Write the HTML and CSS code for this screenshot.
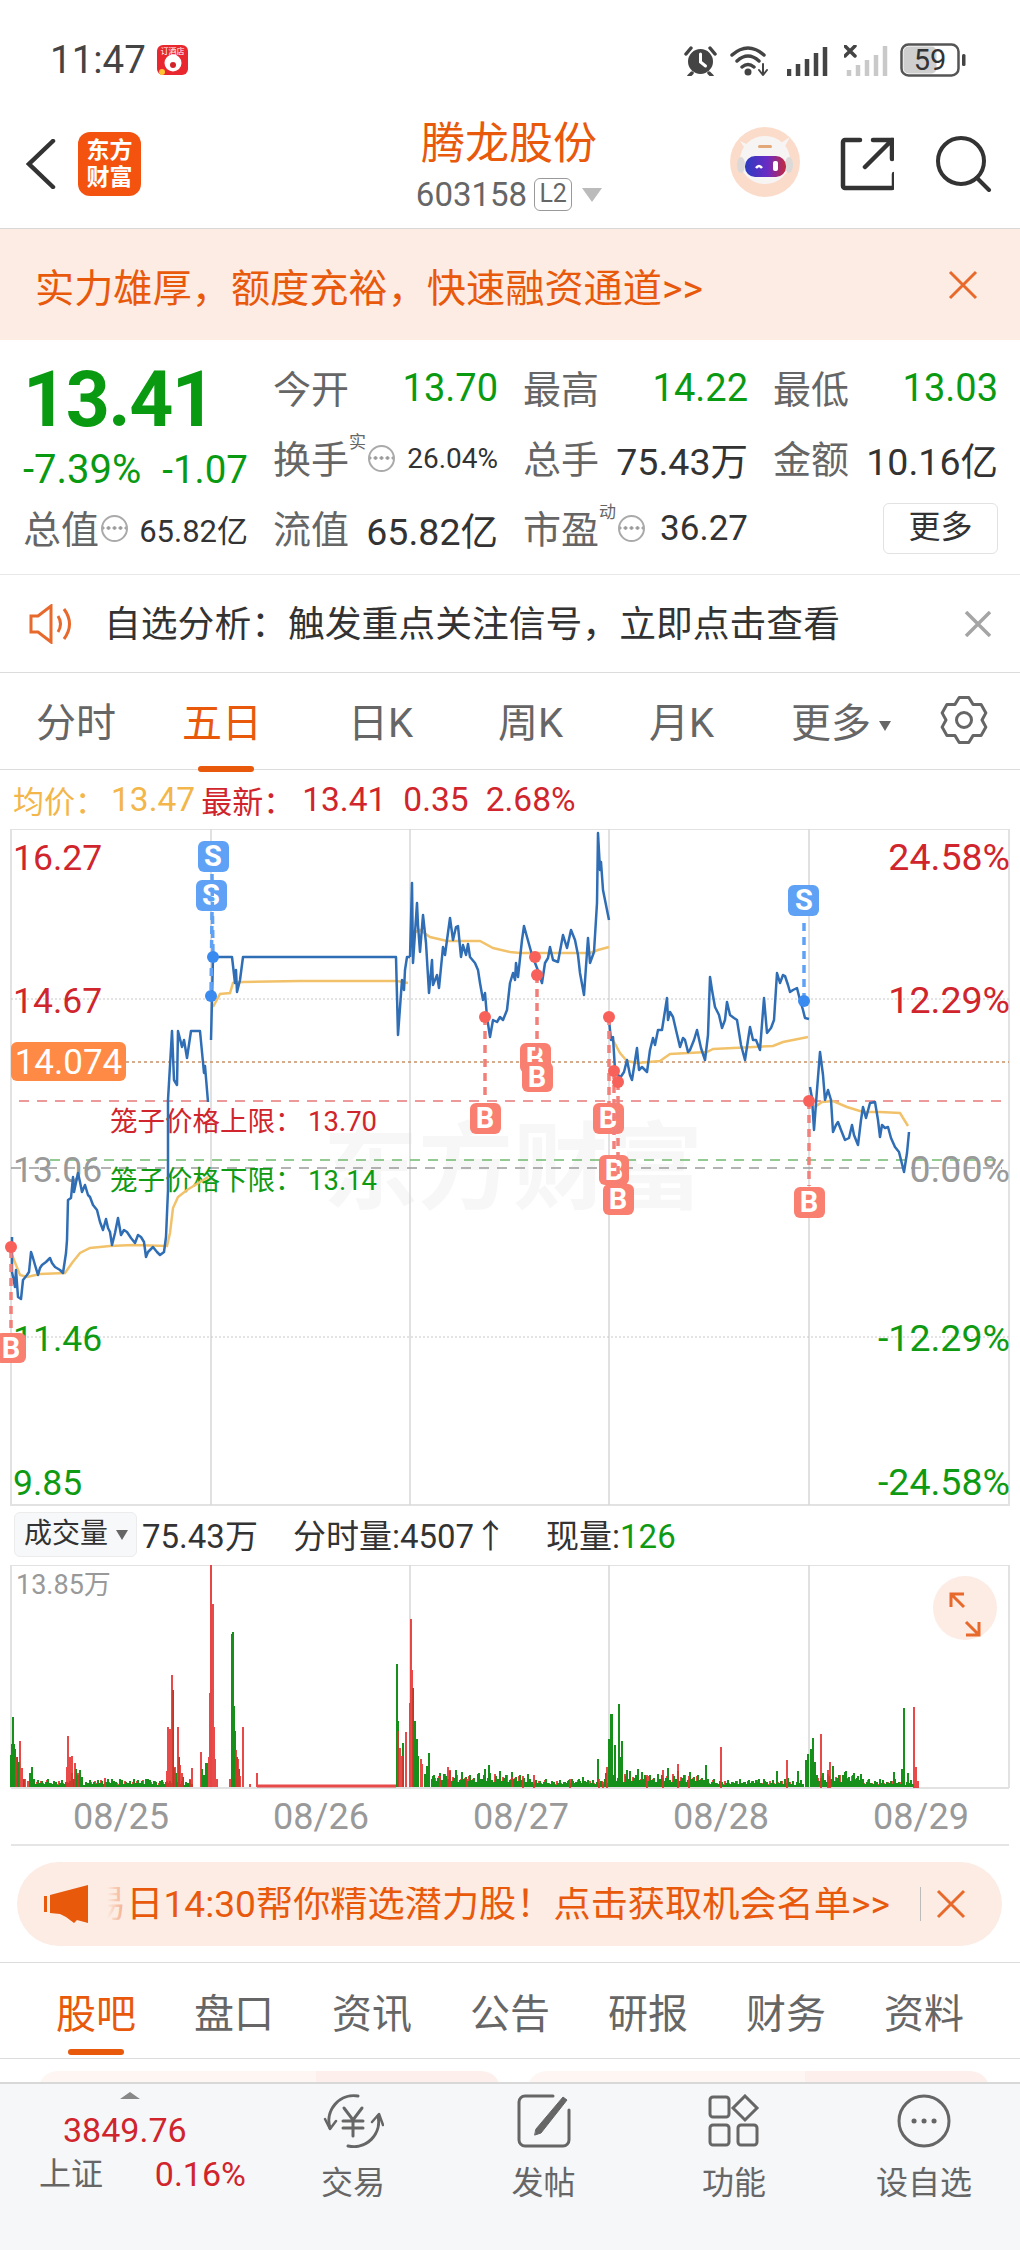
FILE: index.html
```html
<!DOCTYPE html>
<html lang="zh-CN">
<head>
    <meta charset="UTF-8">
    <meta name="viewport" content="width=device-width, initial-scale=1.0">
    <title>腾龙股份 603158</title>
    <link rel="stylesheet" href="styles.css">
</head>
<body>
<div class="phone">

    <!-- 状态栏 -->
    <div class="statusbar">
        <div class="status-left">
            <span class="clock">11:47</span>
            <svg class="app-badge" viewBox="0 0 31 30">
                <rect width="31" height="30" rx="6" class="badge-bg"/>
                <text x="15.5" y="9" class="badge-text">订酒店</text>
                <circle cx="16" cy="18" r="8.5" class="badge-face"/>
                <circle cx="16" cy="20" r="3" class="badge-mouth"/>
                <circle cx="5" cy="27" r="3" class="badge-coin"/>
            </svg>
        </div>
        <div class="status-right">
            <svg class="ic-alarm" viewBox="0 0 33 31">
                <circle cx="16.5" cy="16.5" r="12.5" class="ic-dark"/>
                <path d="M16.5 9v8l5 4" class="ic-hand"/>
                <path d="M2 9l5-6M31 9l-5-6M8 28l-3 3M25 28l3 3" class="ic-stroke"/>
            </svg>
            <svg class="ic-wifi" viewBox="0 0 40 32">
                <path d="M2 11q16-14 32 0M7 17q11-10 22 0M12 23q6-5 12 0" class="ic-stroke"/>
                <circle cx="18" cy="28" r="3.5" class="ic-dark"/>
                <path d="M33 20v11M29 26l4 5 4-5" class="ic-thin"/>
            </svg>
            <svg class="ic-signal" viewBox="0 0 41 31">
                <path d="M2 31v-7M11 31v-12M20 31v-17M29 31v-23M38 31v-29" class="ic-bars"/>
            </svg>
            <svg class="ic-signal2" viewBox="0 0 44 31">
                <path d="M5 31v-6M14 31v-11M23 31v-16M32 31v-21M41 31v-30" class="ic-bars-off"/>
                <path d="M1 1l10 10M11 1L1 11" class="ic-stroke"/>
            </svg>
            <svg class="ic-battery" viewBox="0 0 67 34">
                <rect x="1.5" y="1.5" width="57" height="31" rx="7" class="bat-shell"/>
                <rect x="3.5" y="3.5" width="33" height="27" rx="5" class="bat-fill"/>
                <rect x="62" y="11" width="3.5" height="12" rx="1.5" class="ic-dark"/>
                <text x="30" y="27" class="bat-text">59</text>
            </svg>
        </div>
    </div>

    <!-- 顶部导航 -->
    <div class="navbar">
        <div class="nav-left">
            <svg class="ic-back" viewBox="0 0 30 50"><path d="M27 2L3 25l24 23"/></svg>
            <div class="brand">东方<br>财富</div>
        </div>
        <div class="nav-title">
            <div class="stock-name">腾龙股份</div>
            <div class="stock-code">603158<span class="l2">L2</span><span class="tri-down"></span></div>
        </div>
        <div class="nav-right">
            <svg class="ic-robot" viewBox="0 0 70 70">
                <defs>
                    <linearGradient id="visor" x1="0" x2="1" y1="0" y2="0">
                        <stop offset="0" stop-color="#2c3cc0"/>
                        <stop offset="0.55" stop-color="#6a2bc4"/>
                        <stop offset="1" stop-color="#c42a3c"/>
                    </linearGradient>
                </defs>
                <circle cx="35" cy="35" r="35" class="robot-bg"/>
                <path d="M10 14l6 9 7-3zM60 10l-6 11-6-3z" class="robot-horn"/>
                <ellipse cx="35" cy="33" rx="25" ry="24" class="robot-head"/>
                <ellipse cx="11" cy="38" rx="4" ry="8" class="robot-side"/>
                <ellipse cx="59" cy="38" rx="4" ry="8" class="robot-side"/>
                <rect x="28" y="18" width="14" height="3" rx="1.5" class="robot-mark"/>
                <rect x="15" y="29" width="41" height="21" rx="10" fill="url(#visor)"/>
                <path d="M26 41q3-4 6 0" class="robot-eye"/>
                <rect x="43" y="34" width="5" height="10" rx="2" class="robot-eye-r"/>
            </svg>
            <svg class="ic-share" viewBox="0 0 54 54">
                <path d="M20 3H5a2 2 0 0 0-2 2v44a2 2 0 0 0 2 2h47a2 2 0 0 0 2-2V37"/>
                <path d="M25 30L52 3M33 3h19v19"/>
            </svg>
            <svg class="ic-search" viewBox="0 0 56 56">
                <circle cx="25" cy="25" r="23"/>
                <path d="M41 42l12 12"/>
            </svg>
        </div>
    </div>

    <!-- 融资横幅 -->
    <div class="banner">
        <span class="banner-text">实力雄厚，额度充裕，快速融资通道&gt;&gt;</span>
        <svg class="ic-close-orange" viewBox="0 0 30 30"><path d="M2 2l26 26M28 2L2 28"/></svg>
    </div>

    <!-- 行情数据 -->
    <div class="quote">
        <div class="cell price">13.41</div>
        <div class="cell"><span class="lbl">今开</span><span class="val down">13.70</span></div>
        <div class="cell"><span class="lbl">最高</span><span class="val down">14.22</span></div>
        <div class="cell"><span class="lbl">最低</span><span class="val down">13.03</span></div>

        <div class="cell change"><span class="pct">-7.39%</span><span>-1.07</span></div>
        <div class="cell">
            <span class="lbl">换手</span><span class="sup">实</span>
            <span class="dots-ic"></span><span class="val small">26.04%</span>
        </div>
        <div class="cell"><span class="lbl">总手</span><span class="val">75.43万</span></div>
        <div class="cell"><span class="lbl">金额</span><span class="val">10.16亿</span></div>

        <div class="cell">
            <span class="lbl">总值</span><span class="dots-ic"></span><span class="val mid">65.82亿</span>
        </div>
        <div class="cell"><span class="lbl">流值</span><span class="val">65.82亿</span></div>
        <div class="cell">
            <span class="lbl">市盈</span><span class="sup">动</span>
            <span class="dots-ic"></span><span class="val pe">36.27</span>
        </div>
        <div class="cell more-cell"><span class="more-btn">更多</span></div>
    </div>

    <!-- 提示 -->
    <div class="notice">
        <svg class="ic-speaker" viewBox="0 0 46 40">
            <path d="M2 12h7L22 2v36L9 28H2z"/>
            <path d="M29 12q5 8 0 16M35 5q11 15 0 30"/>
        </svg>
        <span class="notice-text">自选分析：触发重点关注信号，立即点击查看</span>
        <svg class="ic-close-gray" viewBox="0 0 28 26"><path d="M2 1l24 24M26 1L2 25"/></svg>
    </div>

    <!-- 周期切换 -->
    <div class="periods">
        <span class="period">分时</span>
        <span class="period active">五日</span>
        <span class="period">日K</span>
        <span class="period">周K</span>
        <span class="period">月K</span>
        <span class="period">更多<i class="tri-small"></i></span>
        <svg class="ic-gear" viewBox="0 0 48 48">
            <path d="M19.2 1.5h9.6L33 8.4l8.1.2 4.8 8.3-3.9 7.1 3.9 7.1-4.8 8.3-8.1.2-4.2 6.9h-9.6L15 39.6l-8.1-.2-4.8-8.3L6 24l-3.9-7.1 4.8-8.3 8.1-.2z"/>
            <circle cx="24" cy="24" r="7.5"/>
        </svg>
    </div>

    <div class="legend">
        <span class="avg">均价：</span><span class="avg num">13.47</span>
        <span class="rise">最新：</span><span class="rise num first">13.41</span>
        <span class="rise num gap">0.35</span><span class="rise num gap">2.68%</span>
    </div>

    <!-- 价格图 -->
    <svg class="price-chart" viewBox="0 829 1020 677">
        <text x="323" y="1202" class="watermark">东方财富</text>

        <path d="M11 829H1009V1505H11z" class="frame"/>
        <path d="M211 829V1505M410 829V1505M609 829V1505M809 829V1505" class="grid"/>
        <path d="M11 999H1009M11 1337H1009" class="dotted"/>
        <path d="M126 1062H1009" class="dotted-orange"/>
        <path d="M19 1101H1002" class="dash-red"/>
        <path d="M50 1160H1002" class="dash-green"/>
        <path d="M11 1168H1002" class="dash-gray"/>

        <text x="13" y="870" class="axis rise-fill">16.27</text>
        <text x="13" y="1013" class="axis rise-fill">14.67</text>
        <text x="13" y="1182" class="axis flat-fill">13.06</text>
        <text x="13" y="1351" class="axis down-fill">11.46</text>
        <text x="13" y="1495" class="axis down-fill">9.85</text>
        <text x="1010" y="870" class="axis end rise-fill">24.58%</text>
        <text x="1010" y="1013" class="axis end rise-fill">12.29%</text>
        <text x="1010" y="1182" class="axis end flat-fill">0.00%</text>
        <text x="1010" y="1351" class="axis end down-fill">-12.29%</text>
        <text x="1010" y="1495" class="axis end down-fill">-24.58%</text>

        <text x="110" y="1131" class="cage rise-fill">笼子价格上限：<tspan x="308">13.70</tspan></text>
        <text x="110" y="1190" class="cage down-fill">笼子价格下限：<tspan x="308">13.14</tspan></text>

        <!-- 均价线 -->
        <path class="avg-line" d="M12 1255L20 1275 27 1277 40 1274 65 1273 72 1263 80 1253 90 1248 110 1246 133 1245 167 1246 170 1233 173 1208 178 1197 187 1190 200 1182 208 1177"/>
        <path class="avg-line" d="M213 1007L220 994 230 993 233 983 243 982 300 981 397 981 408 983"/>
        <path class="avg-line" d="M413 933L420 930 430 937 447 941 480 941 493 948 510 952 520 953 580 953 590 953 598 950 609 947"/>
        <path class="avg-line" d="M613 1040L620 1053 627 1061 637 1063 660 1061 670 1054 707 1052 713 1049 773 1046 783 1042 808 1037"/>
        <path class="avg-line" d="M815 1107L822 1102 833 1101 847 1107 863 1112 880 1112 900 1113 908 1126"/>

        <!-- 分时线 -->
        <path class="price-line" d="M12 1237L12 1272 15 1287 16 1270 18 1297 21 1299 23 1280 27 1275 29 1272 31 1252 33 1258 35 1265 38 1275 40 1268 42 1265 46 1262 50 1258 52 1263 55 1267 60 1270 63 1273 66 1253 67 1240 68 1200 71 1198 73 1177 74 1192 78 1173 80 1182 82 1192 85 1185 88 1195 90 1197 93 1205 97 1210 100 1222 103 1230 106 1219 108 1228 110 1232 112 1245 115 1233 118 1218 121 1235 124 1230 127 1232 131 1238 135 1243 138 1235 141 1237 144 1242 146 1257 148 1252 153 1247 157 1252 160 1255 164 1252 166 1237 168 1190 168 1100 172 1031 174 1080 177 1085 178 1031 182 1047 184 1040 187 1058 191 1031 200 1031 204 1073 205 1066 208 1102"/>
        <path class="price-line" d="M211 1040L213 957 232 957 235 983 236 970 237 992 240 980 243 957 396 957 398 1035 402 980 404 990 405 970 407 957 410 957"/>
        <path class="price-line" d="M410 957L412 883 413 963 417 903 418 925 420 952 423 915 426 943 429 993 432 960 433 985 437 975 439 988 443 947 445 955 447 940 450 918 453 940 456 927 458 926 461 957 463 945 466 955 468 944 470 957 475 963 478 970 480 983 483 1000 485 993 487 1017 490 1037 493 1020 497 1022 500 1017 503 1020 507 1010 510 983 513 973 515 980 516 963 518 977 522 940 524 926 527 937 532 955 537 968 542 983 545 963 548 958 550 947 553 960 558 962 563 935 567 948 571 930 575 940 578 955 580 973 584 995 588 938 590 963 594 952 597 903 598 833 600 870 601 862 603 890 606 905 609 920"/>
        <path class="price-line" d="M609 1020L611 1040 613 1037 615 1070 617 1073 620 1078 624 1072 627 1060 630 1075 632 1080 637 1048 639 1070 642 1067 647 1072 650 1050 653 1038 655 1045 658 1030 662 1030 667 998 668 1020 670 1012 673 1017 676 1030 680 1047 683 1038 685 1040 688 1052 690 1050 694 1040 697 1030 701 1048 705 1060 708 1035 710 977 712 990 715 1007 719 1015 722 1028 725 1020 727 1002 730 1015 734 1018 737 1020 741 1045 745 1060 748 1040 750 1027 753 1040 756 1040 760 1050 764 998 767 1033 771 1028 774 1020 777 973 780 983 783 975 785 976 788 985 790 992 793 990 797 988 800 1000 803 1010 805 1018 809 1019"/>
        <path class="price-line" d="M810 1087L812 1098 814 1130 817 1090 820 1052 823 1075 825 1100 828 1090 831 1100 833 1132 836 1125 838 1122 841 1130 845 1140 849 1138 852 1125 854 1135 858 1145 861 1120 863 1107 866 1118 870 1103 875 1102 878 1120 880 1137 882 1125 885 1128 888 1127 891 1138 895 1147 899 1152 904 1172 907 1153 909 1132"/>

        <!-- 买卖点 -->
        <g class="mark-sell">
            <rect x="198" y="841" width="31" height="31" rx="6"/>
            <rect x="196" y="880" width="31" height="31" rx="6"/>
            <rect x="788" y="885" width="31" height="31" rx="6"/>
        </g>
        <text x="213" y="866" class="mark-text">S</text>
        <text x="211" y="905" class="mark-text">S</text>
        <text x="804" y="910" class="mark-text">S</text>

        <g class="mark-buy">
            <rect x="-4" y="1333" width="30" height="30" rx="6"/>
            <rect x="470" y="1103" width="31" height="31" rx="6"/>
            <rect x="520" y="1043" width="31" height="30" rx="6"/>
        </g>
        <text x="535" y="1068" class="mark-text">B</text>
        <g class="mark-buy">
            <rect x="522" y="1062" width="31" height="30" rx="6"/>
            <rect x="593" y="1103" width="31" height="31" rx="6"/>
            <rect x="599" y="1155" width="30" height="30" rx="6"/>
            <rect x="603" y="1184" width="31" height="31" rx="6"/>
            <rect x="794" y="1187" width="31" height="31" rx="6"/>
        </g>
        <text x="11" y="1358" class="mark-text">B</text>
        <text x="485" y="1128" class="mark-text">B</text>
        <text x="537" y="1087" class="mark-text">B</text>
        <text x="608" y="1128" class="mark-text">B</text>
        <text x="614" y="1180" class="mark-text">B</text>
        <text x="618" y="1209" class="mark-text">B</text>
        <text x="809" y="1212" class="mark-text">B</text>

        <path class="dash-sell" d="M212 874L213 957M212 912L211 996M804 923V1000"/>
        <path class="dash-buy" d="M11 1250V1332M485 1017V1100M537 975V1060M609 1017V1103M614 1071V1155M618 1082V1184M809 1101V1186"/>

        <g class="dot-sell">
            <circle cx="213" cy="957" r="6"/>
            <circle cx="211" cy="996" r="6"/>
            <circle cx="804" cy="1001" r="6"/>
        </g>
        <g class="dot-buy">
            <circle cx="11" cy="1247" r="6"/>
            <circle cx="485" cy="1017" r="6"/>
            <circle cx="535" cy="957" r="6"/>
            <circle cx="537" cy="975" r="6"/>
            <circle cx="609" cy="1017" r="6"/>
            <circle cx="614" cy="1071" r="6"/>
            <circle cx="618" cy="1082" r="6"/>
            <circle cx="809" cy="1101" r="6"/>
        </g>

        <rect x="11" y="1042" width="115" height="39" rx="6" class="tag-bg"/>
        <text x="68.5" y="1074" class="tag-text">14.074</text>
    </svg>

    <!-- 成交量 -->
    <div class="vol-head">
        <span class="vol-select">成交量<i class="tri-small dark"></i></span>
        <span class="vol-total">75.43万</span>
        <span class="vol-part">分时量:4507↑</span>
        <span class="vol-now">现量:<em>126</em></span>
    </div>

    <svg class="vol-chart" viewBox="0 1565 1020 225">
        <defs>
            <path id="noise-g" d="M0 1787v-5m2 5v-3m2 3v-7m2 7v-4m2 4v-6m2 6v-3m2 3v-5m2 5v-8m2 8v-4m2 4v-3m2 3v-6m2 6v-5m2 5v-2m2 2v-4m2 4v-7m2 7v-3m2 3v-5m2 5v-4m2 4v-6m2 6v-3m2 3v-8m2 8v-4m2 4v-5m2 5v-3m2 3v-6m2 6v-2m2 2v-5m2 5v-4m2 4v-7m2 7v-3"/>
            <path id="noise-r" d="M1 1787v-3m2 3v-5m2 5v-2m2 2v-6m2 6v-4m2 4v-2m2 2v-7m2 7v-3m2 3v-4m2 4v-2m2 2v-5m2 5v-3m2 3v-6m2 6v-2m2 2v-4m2 4v-3m2 3v-5m2 5v-2m2 2v-6m2 6v-3m2 3v-4m2 4v-2m2 2v-5m2 5v-3"/>
            <path id="noise-g2" d="M0 1787v-8m2 8v-12m2 12v-6m2 6v-9m2 9v-14m2 14v-7m2 7v-5m2 5v-11m2 11v-8m2 8v-16m2 16v-6m2 6v-9m2 9v-12m2 12v-5m2 5v-7m2 7v-15m2 15v-8m2 8v-10m2 10v-6m2 6v-12m2 12v-7m2 7v-9m2 9v-5m2 5v-13m2 13v-8"/>
            <path id="noise-r2" d="M1 1787v-6m2 6v-9m2 9v-4m2 4v-11m2 11v-7m2 7v-5m2 5v-13m2 13v-6m2 6v-8m2 8v-4m2 4v-10m2 10v-6m2 6v-12m2 12v-5m2 5v-8m2 8v-6m2 6v-9m2 9v-4m2 4v-11m2 11v-6m2 6v-8m2 8v-5"/>
        </defs>
        <path d="M11 1565H1009M11 1788H1009M11 1565V1788M1009 1565V1788" class="frame"/>
        <path d="M211 1565V1788M410 1565V1788M609 1565V1788M809 1565V1788" class="grid"/>

        <g class="bars-red">
            <use href="#noise-r" x="34"/><use href="#noise-r" x="88"/><use href="#noise-r" x="130"/>
            <use href="#noise-r2" x="432"/><use href="#noise-r2" x="482"/><use href="#noise-r" x="532"/><use href="#noise-r" x="565"/>
            <use href="#noise-r2" x="612"/><use href="#noise-r2" x="660"/><use href="#noise-r" x="700"/><use href="#noise-r" x="745"/>
            <use href="#noise-r2" x="815"/><use href="#noise-r" x="855"/>
        </g>
        <g class="bars-green">
            <use href="#noise-g" x="34"/><use href="#noise-g" x="94"/><use href="#noise-g" x="134" />
            <use href="#noise-g2" x="432"/><use href="#noise-g2" x="482"/><use href="#noise-g" x="532"/><use href="#noise-g" x="565"/>
            <use href="#noise-g2" x="612"/><use href="#noise-g2" x="660"/><use href="#noise-g" x="700"/><use href="#noise-g" x="745"/>
            <use href="#noise-g2" x="815"/><use href="#noise-g" x="855"/>
            <path d="M11 1787v-32m1 32v-43m1 43v-70m1 70v-43m1 43v-38m2 38v-30m2 30v-25m5 25v-8m6 8v-14m2 14v-20m2 20v-8m38 8v-14m4 14v-18m2 18v-12m2 12v-17m2 17v-10m30 10v-8m8 8v-8m26 8v-8m14 8v-6m13 6v-97m1 97v-19m2 19v-14m3 14v-30m4 30v-10m19 10v-18m2 18v-12m2 12v-24m1 24v-24m25 24v-153m1 153v-155m1 155v-81m1 81v-56m2 56v-30m2 30v-18"/>
            <path d="M397 1787v-123m1 123v-66m5 66v-44m10 44v-99m2 99v-66m2 66v-48m1 48v-31m7 31v-13m2 13v-21m2 21v-34m4 34v-11m11 11v-13m12 13v-17m23 17v-14m6 14v-18m4 18v-22m94 22v-10m15 10v-28m8 28v-14m3 14v-48m2 48v-73m1 73v-73m3 73v-42m4 42v-83m1 83v-30m2 30v-46m5 46v-17m11 17v-18m7 18v-12m23 12v-19m16 19v-10m22 10v-22"/>
            <path d="M764 1787v-8m13 8v-16m11 16v-9m10 9v-16m8 16v-27m2 27v-33m3 33v-38m2 38v-49m2 49v-25m18 25v-21m10 21v-12m3 12v-16m8 16v-14m4 14v-11m22 11v-8m14 8v-15m8 15v-18m2 18v-79m4 79v-14"/>
        </g>
        <g class="bars-red">
            <path d="M16 1787v-30m4 30v-46m2 46v-19m3 19v-8m3 8v-6m39 6v-20m1 20v-51m2 51v-30m2 30v-31m3 31v-24m3 24v-14m27 14v-9m62 9v-16m1 16v-60m2 60v-58m2 58v-112m3 112v-20m3 20v-60m2 60v-22m2 22v-14m8 14v-8m2 8v-19m9 19v-35m8 35v-30m1 30v-94m1 94v-223m1 223v-183m1 183v-183m1 183v-60m1 60v-28m2 28v-8m13 8v-8m6 8v-37m2 37v-28m2 28v-11m3 11v-60m7 60v-3m7 3v-14"/>
            <path d="M398 1787v-56m2 56v-39m2 39v-31m4 31v-55m4 55v-84m1 84v-168m1 168v-117m9 117v-28m1 28v-23m18 23v-11m8 11v-20m2 20v-17m17 17v-8m45 8v-10m11 11v-12m11 12v-13m36 13v-9m29 9v-9m4 9v-6m4 6v-21m40 21v-13m16 13v-18m15 18v-24m11 24v-12m32 12v-41m66 41v-28m34 28v-54m9 54v-26m-2 26v-18m86 18v-81m2 81v-21m2 21v-7"/>
            <path d="M257 1786H396" class="flat-vol"/>
        </g>

        <text x="16" y="1594" class="vol-max">13.85万</text>

        <circle cx="965" cy="1608" r="32" class="expand-bg"/>
        <path d="M951 1607v-13h13M951 1594l13 13M979 1622v13h-13M979 1635l-13-13" class="expand-ic"/>
    </svg>

    <div class="dates">
        <span>08/25</span><span>08/26</span><span>08/27</span><span>08/28</span><span>08/29</span>
    </div>

    <!-- 推广条 -->
    <div class="promo-wrap">
        <div class="promo">
            <svg class="ic-horn" viewBox="0 0 44 38">
                <path d="M0 11h3v16H0zM6 10L44 0v38l-11-3-3 3-8-6-6-3-10-1z"/>
            </svg>
            <div class="promo-scroll"><span class="promo-text">易日14:30帮你精选潜力股！点击获取机会名单&gt;&gt;</span></div>
            <svg class="ic-close-orange small" viewBox="0 0 30 30"><path d="M2 2l26 26M28 2L2 28"/></svg>
        </div>
    </div>

    <!-- 资讯页签 -->
    <div class="subtabs">
        <span class="subtab active">股吧</span>
        <span class="subtab">盘口</span>
        <span class="subtab">资讯</span>
        <span class="subtab">公告</span>
        <span class="subtab">研报</span>
        <span class="subtab">财务</span>
        <span class="subtab">资料</span>
    </div>

    <div class="peek">
        <div class="peek-card"></div>
        <div class="peek-card"></div>
    </div>

    <!-- 底部栏 -->
    <div class="footer">
        <div class="index">
            <span class="tri-up"></span>
            <div class="index-val">3849.76</div>
            <div class="index-row"><span>上证</span><span class="index-pct">0.16%</span></div>
        </div>
        <div class="foot-item trade">
            <svg viewBox="0 0 62 54">
                <path d="M36 2A25 25 0 0 0 8 34M26 52a25 25 0 0 0 30-30"/>
                <path d="M3 25l5 10 6-8M50 28l7-8 4 11" class="thin"/>
                <path d="M22 14l9 12 9-12M31 26v16M21 27h20M21 34h20"/>
            </svg>
            <span>交易</span>
        </div>
        <div class="foot-item post">
            <svg viewBox="0 0 54 54">
                <path d="M36 2H8a6 6 0 0 0-6 6v38a6 6 0 0 0 6 6h38a6 6 0 0 0 6-6V16"/>
                <path d="M19 35L46 3l4 3-26 33-6 2z" class="fill"/>
            </svg>
            <span>发帖</span>
        </div>
        <div class="foot-item func">
            <svg viewBox="0 0 52 52">
                <rect x="2" y="2" width="19" height="20" rx="3"/>
                <path d="M37 1l12 12-12 12-12-12z"/>
                <rect x="2" y="30" width="19" height="20" rx="3"/>
                <rect x="30" y="30" width="19" height="20" rx="3"/>
            </svg>
            <span>功能</span>
        </div>
        <div class="foot-item fav">
            <svg viewBox="0 0 54 54">
                <circle cx="27" cy="27" r="25"/>
                <path d="M17 27h.1M27 27h.1M37 27h.1" class="dots"/>
            </svg>
            <span>设自选</span>
        </div>
    </div>
</div>
</body>
</html>
```

FILE: styles.css
```css
* {
    box-sizing: border-box;
}
body {
    margin: 0;
    background: #fff;
    font-family: Roboto, "Noto Sans CJK SC", sans-serif;
    color: #333;
}
.phone {
    width: 1020px;
    height: 2250px;
    overflow: hidden;
    background: #fff;
}
svg {
    display: block;
    flex: none;
}

/* status bar */
.statusbar {
    height: 85px;
    padding: 35px 53px 0 50px;
    display: flex;
    justify-content: space-between;
    align-items: center;
}
.status-left {
    display: flex;
    align-items: center;
    gap: 11px;
}
.clock {
    font-size: 38.5px;
    line-height: 50px;
    color: #444;
}
.app-badge {
    width: 31px;
    height: 30px;
}
.badge-bg { fill: #e8282e; }
.badge-text {
    fill: #fff;
    font-size: 8px;
    text-anchor: middle;
}
.badge-face { fill: #fff; }
.badge-mouth { fill: #d3232a; }
.badge-coin { fill: #ffc533; }
.status-right {
    display: flex;
    align-items: center;
}
.ic-alarm { width: 33px; height: 31px; margin-right: 13px; }
.ic-wifi { width: 40px; height: 32px; margin-right: 17px; }
.ic-signal { width: 41px; height: 31px; margin-right: 16px; }
.ic-signal2 { width: 44px; height: 31px; margin-right: 12px; }
.ic-battery { width: 67px; height: 34px; }
.ic-dark { fill: #444; }
.ic-hand, .ic-stroke, .ic-thin, .ic-bars, .ic-bars-off {
    fill: none;
    stroke: #444;
    stroke-width: 3.5;
    stroke-linecap: round;
}
.ic-hand { stroke: #fff; stroke-width: 3; }
.ic-thin { stroke-width: 2; }
.ic-bars { stroke-width: 4.5; stroke-linecap: butt; }
.ic-bars-off { stroke: #c9c9c9; stroke-width: 4.5; stroke-linecap: butt; }
.bat-shell { fill: none; stroke: #555; stroke-width: 2.5; }
.bat-fill { fill: #cfcfcf; }
.bat-text {
    fill: #333;
    font-size: 29px;
    text-anchor: middle;
}

/* nav */
.navbar {
    height: 144px;
    padding: 14px 28px 0 26px;
    border-bottom: 1px solid #d8d8d8;
    display: grid;
    grid-template-columns: 1fr auto 1fr;
    align-items: center;
}
.nav-left {
    display: flex;
    align-items: center;
    gap: 22px;
}
.ic-back {
    width: 30px;
    height: 50px;
    fill: none;
    stroke: #333;
    stroke-width: 4.5;
    stroke-linecap: round;
}
.brand {
    width: 63px;
    height: 64px;
    border-radius: 12px;
    background: #f4530f;
    color: #fff;
    font-size: 23px;
    font-weight: 700;
    line-height: 27px;
    text-align: center;
    padding-top: 5px;
}
.nav-title {
    text-align: center;
    margin-top: 2px;
}
.stock-name {
    font-size: 44px;
    line-height: 60px;
    color: #e8590c;
}
.stock-code {
    display: flex;
    align-items: center;
    justify-content: center;
    font-size: 33px;
    line-height: 42px;
    color: #666;
    margin-top: 0;
}
.l2 {
    width: 38px;
    height: 33px;
    margin-left: 7px;
    border: 1.5px solid #999;
    border-radius: 6px;
    font-size: 25px;
    line-height: 30px;
    text-align: center;
    color: #666;
}
.tri-down {
    margin-left: 10px;
    border-left: 10px solid transparent;
    border-right: 10px solid transparent;
    border-top: 14px solid #bbb;
}
.nav-right {
    display: flex;
    justify-content: flex-end;
    align-items: center;
}
.ic-robot { width: 70px; height: 70px; margin-right: 40px; margin-top: -4px; }
.robot-bg { fill: #fbdccb; }
.robot-horn, .robot-head { fill: #f7f5f4; }
.robot-side { fill: #dcdad9; }
.robot-mark { fill: #e3a878; }
.robot-eye { fill: none; stroke: #fff; stroke-width: 2.5; }
.robot-eye-r { fill: #fff; }
.ic-share {
    width: 54px;
    height: 54px;
    margin-right: 42px;
    fill: none;
    stroke: #333;
    stroke-width: 4.5;
    stroke-linecap: round;
}
.ic-search {
    width: 56px;
    height: 56px;
    fill: none;
    stroke: #333;
    stroke-width: 4;
    stroke-linecap: round;
}

/* banner */
.banner {
    height: 111px;
    padding: 0 42px 0 35px;
    background: #fcece4;
    display: flex;
    justify-content: space-between;
    align-items: center;
}
.banner-text {
    font-size: 39.2px;
    color: #e8590c;
    white-space: nowrap;
}
.ic-close-orange {
    width: 30px;
    height: 30px;
    fill: none;
    stroke: #e8692c;
    stroke-width: 3;
}
.ic-close-orange.small {
    margin-left: 15px;
}

/* quote */
.quote {
    height: 235px;
    padding: 13px 0 12px 23px;
    border-bottom: 1px solid #e8e8e8;
    display: grid;
    grid-template-columns: repeat(4, 225px);
    grid-template-rows: repeat(3, 70px);
    column-gap: 25px;
}
.cell {
    display: flex;
    align-items: center;
    white-space: nowrap;
}
.lbl {
    font-size: 38px;
    color: #666;
    margin-bottom: 3px;
}
.val {
    margin-left: auto;
    font-size: 37.5px;
    color: #333;
}
.val.down { color: #0a9a12; font-size: 38px; }
.val.small { font-size: 28px; }
.val.mid { font-size: 31px; }
.val.pe { font-size: 35px; }
.price {
    align-self: start;
    margin-top: 12px;
    font-size: 77px;
    line-height: 70px;
    font-weight: 700;
    letter-spacing: -1.5px;
    color: #0a9a12;
}
.change {
    justify-content: space-between;
    margin-top: 22px;
    height: 48px;
    font-size: 38.5px;
    color: #0a9a12;
}
.change .pct { font-size: 40px; }
.sup {
    align-self: flex-start;
    margin-top: 10px;
    font-size: 17px;
    line-height: 18px;
    color: #666;
}
.dots-ic {
    width: 27px;
    height: 27px;
    margin-left: 2px;
    border: 2px solid #aaa;
    border-radius: 50%;
    background: radial-gradient(circle, #999 1.5px, transparent 2px) center / 6px 6px repeat-x;
}
.more-cell {
    justify-content: flex-end;
}
.more-btn {
    width: 115px;
    height: 51px;
    border: 1px solid #e2e2e2;
    border-radius: 6px;
    font-size: 32px;
    line-height: 47px;
    text-align: center;
    color: #333;
}

/* notice */
.notice {
    height: 98px;
    padding: 0 28px 0 29px;
    border-bottom: 1px solid #dcdcdc;
    display: flex;
    align-items: center;
}
.ic-speaker {
    width: 46px;
    height: 40px;
    margin-right: 32px;
    fill: none;
    stroke: #e8692c;
    stroke-width: 3;
}
.notice-text {
    font-size: 36.8px;
    color: #333;
    white-space: nowrap;
    margin-bottom: 6px;
    margin-left: -3px;
}
.ic-close-gray {
    width: 28px;
    height: 26px;
    margin-left: auto;
    fill: none;
    stroke: #a5a5a5;
    stroke-width: 3.5;
}

/* periods */
.periods {
    height: 97px;
    display: flex;
    align-items: center;
    position: relative;
    padding-bottom: 3px;
    border-bottom: 1px solid #dcdcdc;
}
.period {
    flex: none;
    font-size: 40px;
    color: #666;
    text-align: right;
}
.period:nth-child(1) { width: 152px; text-align: left; padding-left: 36px; }
.period:nth-child(2) { width: 140px; text-align: center; }
.period:nth-child(3) { width: 121px; }
.period:nth-child(4) { width: 150px; }
.period:nth-child(5) { width: 151px; }
.period:nth-child(6) { width: 177px; }
.period.active {
    color: #e8590c;
    position: relative;
}
.period.active::after {
    content: "";
    position: absolute;
    left: 46px;
    bottom: -23px;
    width: 56px;
    height: 6px;
    border-radius: 3px;
    background: #e8590c;
}
.tri-small {
    display: inline-block;
    margin-left: 8px;
    vertical-align: middle;
    border-left: 6px solid transparent;
    border-right: 6px solid transparent;
    border-top: 10px solid #666;
}
.ic-gear {
    width: 48px;
    height: 48px;
    margin-left: auto;
    margin-right: 32px;
    fill: none;
    stroke: #666;
    stroke-width: 3;
    stroke-linejoin: round;
}

/* legend */
.legend {
    height: 59px;
    padding: 0 0 0 13px;
    display: flex;
    align-items: center;
    font-size: 31px;
    white-space: nowrap;
}
.avg { color: #f2b64a; }
.rise { color: #d0252c; }
.num { font-size: 33.5px; }
.avg.num { margin-left: 5px; margin-right: 6px; }
.first { margin-left: 8px; }
.gap { margin-left: 17px; }

/* price chart */
.price-chart {
    width: 1020px;
    height: 677px;
}
.frame {
    fill: none;
    stroke: #e2e2e2;
    stroke-width: 2;
}
.grid {
    fill: none;
    stroke: #d8d8d8;
    stroke-width: 1.5;
}
.dotted {
    fill: none;
    stroke: #c8c8c8;
    stroke-width: 1;
    stroke-dasharray: 2 2;
}
.dotted-orange {
    fill: none;
    stroke: #c8906a;
    stroke-width: 1.5;
    stroke-dasharray: 3 3;
}
.dash-red, .dash-green, .dash-gray {
    fill: none;
    stroke-width: 1.5;
    stroke-dasharray: 10 8;
}
.dash-red { stroke: #e8787a; }
.dash-green { stroke: #6fb96f; }
.dash-gray { stroke: #9a9a9a; }
.watermark {
    fill: #f7f7f7;
    font-size: 95px;
    font-weight: 700;
}
.axis { font-size: 35.5px; }
.axis.end { font-size: 37.5px; text-anchor: end; }
.rise-fill { fill: #d0252c; }
.down-fill { fill: #0f9a14; }
.flat-fill { fill: #999; }
.cage { font-size: 27.5px; }
.avg-line {
    fill: none;
    stroke: #f2c26b;
    stroke-width: 2.5;
}
.price-line {
    fill: none;
    stroke: #2f6db5;
    stroke-width: 2.5;
    stroke-linejoin: round;
}
.mark-sell { fill: #5fa2f5; }
.mark-buy { fill: #f97f70; }
.mark-text {
    fill: #fff;
    font-size: 29px;
    font-weight: 700;
    text-anchor: middle;
}
.dash-sell, .dash-buy {
    fill: none;
    stroke-width: 3.5;
    stroke-dasharray: 8 6;
}
.dash-sell { stroke: #5fa2f5; }
.dash-buy { stroke: #f2807a; }
.dot-sell { fill: #3a8bf0; }
.dot-buy { fill: #f8605a; }
.tag-bg { fill: #ff8a45; }
.tag-text {
    fill: #fff;
    font-size: 35px;
    text-anchor: middle;
}

/* volume */
.vol-head {
    height: 59px;
    padding: 0 0 3px 14px;
    display: flex;
    align-items: center;
    font-size: 33px;
    color: #333;
    white-space: nowrap;
}
.vol-select {
    width: 123px;
    height: 45px;
    padding-left: 9px;
    border: 1px solid #ececec;
    border-radius: 6px;
    background: #f7f8fa;
    font-size: 28px;
    line-height: 42px;
}
.vol-total { margin-left: 5px; }
.vol-part { margin-left: 35px; }
.vol-now { margin-left: 39px; }
.vol-now em { font-style: normal; color: #0f9a14; }
.vol-chart {
    width: 1020px;
    height: 225px;
}
.bars-green, .bars-red {
    fill: none;
    stroke-width: 2;
}
.bars-green { stroke: #16901a; }
.bars-red { stroke: #e53030; opacity: 0.88; }
.flat-vol { stroke-width: 3; }
.vol-max {
    fill: #999;
    font-size: 27px;
}
.expand-bg { fill: #fcece4; }
.expand-ic {
    fill: none;
    stroke: #e8692c;
    stroke-width: 3;
}
.dates {
    height: 54px;
    padding: 0 0 0 21px;
    display: grid;
    grid-template-columns: repeat(5, 200px);
    align-items: start;
    font-size: 36px;
    line-height: 54px;
    color: #999;
    text-align: center;
}

/* promo */
.promo-wrap {
    height: 118px;
    margin: 0 11px;
    padding-top: 16px;
    border-top: 2px solid #e5e5e5;
}
.promo {
    height: 84px;
    margin: 0 7px 0 6px;
    padding: 0 35px 0 27px;
    border-radius: 42px;
    background: #fcece4;
    display: flex;
    align-items: center;
}
.ic-horn {
    width: 44px;
    height: 38px;
    fill: #e8590c;
}
.promo-scroll {
    width: 820px;
    margin-left: 13px;
    padding-right: 30px;
    border-right: 1px solid #bbb;
    line-height: 34px;
    height: 34px;
    overflow: hidden;
    position: relative;
}
.promo-scroll::before {
    content: "";
    position: absolute;
    left: 0;
    top: 0;
    width: 30px;
    height: 100%;
    background: linear-gradient(90deg, #fcece4 20%, rgba(252, 236, 228, 0.4));
}
.promo-text {
    display: block;
    margin-left: -12px;
    font-size: 37.2px;
    color: #e8590c;
    white-space: nowrap;
}

/* sub tabs */
.subtabs {
    height: 97px;
    padding: 0 27px;
    border-top: 1px solid #dcdcdc;
    border-bottom: 1px solid #dcdcdc;
    display: grid;
    grid-template-columns: repeat(7, 138px);
    align-items: center;
}
.subtab {
    font-size: 40px;
    color: #666;
    text-align: center;
    position: relative;
}
.subtab.active { color: #e8590c; }
.subtab.active::after {
    content: "";
    position: absolute;
    left: 41px;
    bottom: -15px;
    width: 56px;
    height: 6px;
    border-radius: 3px;
    background: #e8590c;
}
.peek {
    height: 23px;
    padding: 12px 30px 0 38px;
    display: flex;
    justify-content: space-between;
    overflow: hidden;
}
.peek-card {
    width: 463px;
    height: 60px;
    border-radius: 20px;
    background: linear-gradient(90deg, #fdf6f3 60%, #fdf0ec 60%);
}

/* footer */
.footer {
    height: 168px;
    border-top: 2px solid #d8d8d8;
    background: #f6f7f9;
    position: relative;
    display: grid;
    grid-template-columns: 258px 190px 191px 190px 190px;
}
.index {
    padding: 8px 0 0 39px;
    color: #666;
}
.tri-up {
    display: block;
    width: 0;
    margin-left: 81px;
    border-left: 10px solid transparent;
    border-right: 10px solid transparent;
    border-bottom: 7px solid #888;
}
.index-val {
    margin: 9px 0 0 24px;
    font-size: 34px;
    line-height: 44px;
    color: #d0252c;
}
.index-row {
    display: flex;
    align-items: center;
    width: 207px;
    justify-content: space-between;
    font-size: 32px;
    line-height: 44px;
    color: #666;
}
.index-pct {
    font-size: 34px;
    color: #d0252c;
}
.foot-item {
    padding-top: 10px;
    display: flex;
    flex-direction: column;
    align-items: center;
    font-size: 32px;
    line-height: 44px;
    color: #666;
}
.foot-item svg {
    height: 54px;
    margin-bottom: 13px;
    fill: none;
    stroke: #666;
    stroke-width: 3;
    stroke-linecap: round;
}
.trade svg { width: 62px; }
.post svg { width: 54px; }
.func svg { width: 52px; }
.fav svg { width: 54px; }
.foot-item .thin { stroke-width: 2.5; stroke-linejoin: round; }
.foot-item .fill { fill: #666; stroke-width: 1; }
.foot-item .dots { stroke-width: 5; }
```
